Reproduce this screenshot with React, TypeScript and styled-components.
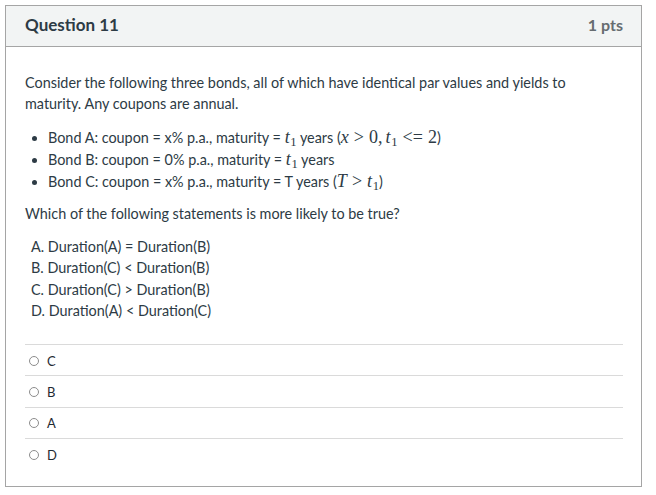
import React from "react";
import styled, { createGlobalStyle } from "styled-components";

const GlobalStyle = createGlobalStyle`
  html, body { margin: 0; padding: 0; background: #ffffff; }
  body { font-family: Lato, "Noto Sans", "Liberation Sans", sans-serif; color: #2d3b45; }
`;

const Page = styled.div`
  padding: 5px 0 0 5px;
`;

const Card = styled.section`
  box-sizing: border-box;
  width: 637px;
  height: 482px;
  border: 1px solid #a5a5a5;
  display: flex;
  flex-direction: column;
`;

const Header = styled.header`
  box-sizing: border-box;
  height: 41px;
  padding: 0 18px 4px 19px;
  background: #f2f4f4;
  border-bottom: 1px solid #a5a5a5;
  display: flex;
  align-items: center;
  justify-content: space-between;
`;

const Title = styled.h2`
  margin: 0;
  font-size: 17px;
  font-weight: 700;
  color: #2d3b45;
`;

const Points = styled.span`
  font-size: 16px;
  font-weight: 700;
  color: #666c70;
`;

const Body = styled.div`
  padding: 25px 18px 0 19px;
  font-size: 14.4px;
`;

const Para = styled.p<{ $gap?: number }>`
  margin: ${(p) => p.$gap ?? 0}px 0 0;
  line-height: 21px;
`;

const BondList = styled.ul`
  margin: 13px 0 0;
  padding-left: 23px;
  list-style: disc;
`;

const BondItem = styled.li`
  line-height: 22px;
`;

const Statements = styled.div`
  margin-top: 12px;
  padding-left: 6px;
`;

const Statement = styled.div`
  line-height: 21.3px;
`;

const Answers = styled.div`
  margin-top: 23px;
`;

const AnswerRow = styled.label`
  box-sizing: border-box;
  height: 31.3px;
  border-top: 1px solid #dadada;
  display: flex;
  align-items: center;
  padding: 1px 0 0 4px;
  gap: 8px;
  font-size: 13px;
  color: #1f2a33;
`;

const Radio = styled.span`
  box-sizing: border-box;
  width: 10px;
  height: 10px;
  border-radius: 50%;
  border: 1px solid #8c8c8c;
  background: #fff;
  flex: none;
`;

const MathExpr = styled.span`
  font-family: "Liberation Serif", "DejaVu Serif", serif;
  font-size: 18px;
  line-height: 12px;
  white-space: nowrap;
  color: #2d3b45;
`;

const Var = styled.span`
  font-style: italic;
`;

const Sub = styled.span`
  font-size: 0.7em;
  position: relative;
  top: 0.22em;
  margin-left: 0.05em;
`;

const Rel = styled.span`
  margin: 0 0.28em;
`;

const Punct = styled.span`
  margin-right: 0.17em;
`;

const T1 = () => (
  <>
    <Var>t</Var>
    <Sub>1</Sub>
  </>
);

export default function App() {
  return (
    <>
      <GlobalStyle />
      <Page>
        <Card>
          <Header>
            <Title>Question 11</Title>
            <Points>1 pts</Points>
          </Header>
          <Body>
            <Para>
              Consider the following three bonds, all of which have identical par values and yields to maturity. Any
              coupons are annual.
            </Para>
            <BondList>
              <BondItem>
                Bond A: coupon = x% p.a., maturity = <MathExpr><T1 /></MathExpr> years (
                <MathExpr>
                  <Var>x</Var>
                  <Rel>&gt;</Rel>0<Punct>,</Punct>
                  <T1 />
                  <Rel>&lt;=</Rel>2
                </MathExpr>
                )
              </BondItem>
              <BondItem>
                Bond B: coupon = 0% p.a., maturity = <MathExpr><T1 /></MathExpr> years
              </BondItem>
              <BondItem>
                Bond C: coupon = x% p.a., maturity = T years (
                <MathExpr>
                  <Var>T</Var>
                  <Rel>&gt;</Rel>
                  <T1 />
                </MathExpr>
                )
              </BondItem>
            </BondList>
            <Para $gap={10}>Which of the following statements is more likely to be true?</Para>
            <Statements>
              <Statement>A. Duration(A) = Duration(B)</Statement>
              <Statement>B. Duration(C) &lt; Duration(B)</Statement>
              <Statement>C. Duration(C) &gt; Duration(B)</Statement>
              <Statement>D. Duration(A) &lt; Duration(C)</Statement>
            </Statements>
            <Answers>
              {["C", "B", "A", "D"].map((a) => (
                <AnswerRow key={a}>
                  <Radio />
                  {a}
                </AnswerRow>
              ))}
            </Answers>
          </Body>
        </Card>
      </Page>
    </>
  );
}
